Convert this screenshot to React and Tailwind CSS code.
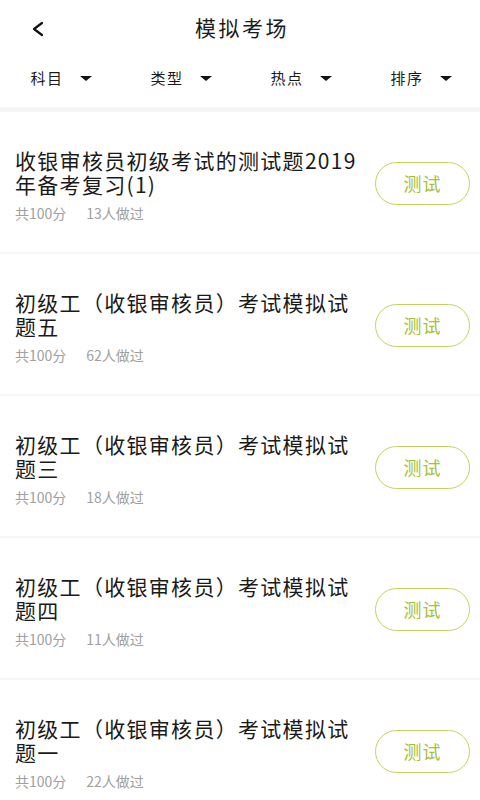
import React from 'react';

const exams = [
  { title: '收银审核员初级考试的测试题2019年备考复习(1)', count: 13 },
  { title: '初级工（收银审核员）考试模拟试题五', count: 62 },
  { title: '初级工（收银审核员）考试模拟试题三', count: 18 },
  { title: '初级工（收银审核员）考试模拟试题四', count: 11 },
  { title: '初级工（收银审核员）考试模拟试题一', count: 22 },
];

const filters = ['科目', '类型', '热点', '排序'];

const Caret = () => (
  <svg width="12" height="5" viewBox="0 0 12 5" className="ml-[16px]">
    <path d="M0 0 H12 L6 5 Z" fill="#111" />
  </svg>
);

const App = () => {
  return (
    <div className="w-[480px] h-[800px] overflow-hidden bg-white font-['Noto_Sans_CJK_SC','Noto_Sans',sans-serif] text-[#1a1a1a]">
      <div className="relative h-[55px] flex items-center justify-center">
        <svg width="14" height="16" viewBox="0 0 14 16" className="absolute left-[31px] top-[21px]">
          <path d="M11 2 L3 8 L11 14" fill="none" stroke="#111" strokeWidth="2.2" strokeLinecap="round" strokeLinejoin="round" />
        </svg>
        <h1 className="text-[21px] tracking-[2.5px] leading-none pl-[4px]">模拟考场</h1>
      </div>

      <div className="grid grid-cols-4 h-[52px] pb-[6px]">
        {filters.map((f) => (
          <div key={f} className="flex items-center justify-center pl-[2px]">
            <span className="text-[15px] tracking-[1.5px]">{f}</span>
            <Caret />
          </div>
        ))}
      </div>

      <div className="h-[5px] bg-[#f5f5f5]"></div>

      {exams.map((e, i) => (
        <div key={i}>
          <div className="h-[140px] flex pl-[15px] pr-[10px]">
            <div className="w-[347px] pt-[36px]">
              <p className="text-[21px] leading-[24px] tracking-[1.3px]">{e.title}</p>
              <div className="mt-[9px] flex text-[14px] leading-[16px] text-[#a0a0a0]">
                <span>共100分</span>
                <span className="ml-[20px]">{e.count}人做过</span>
              </div>
            </div>
            <div className="flex-1 flex items-center justify-end pt-[2px]">
              <button className="w-[95px] h-[43px] rounded-full border-[1.5px] border-[#c2d35f] text-[#a6c03a] text-[18px] tracking-[1px]">
                测试
              </button>
            </div>
          </div>
          <div className="h-[2px] bg-[#f6f6f6]"></div>
        </div>
      ))}
    </div>
  );
};

export default App;
